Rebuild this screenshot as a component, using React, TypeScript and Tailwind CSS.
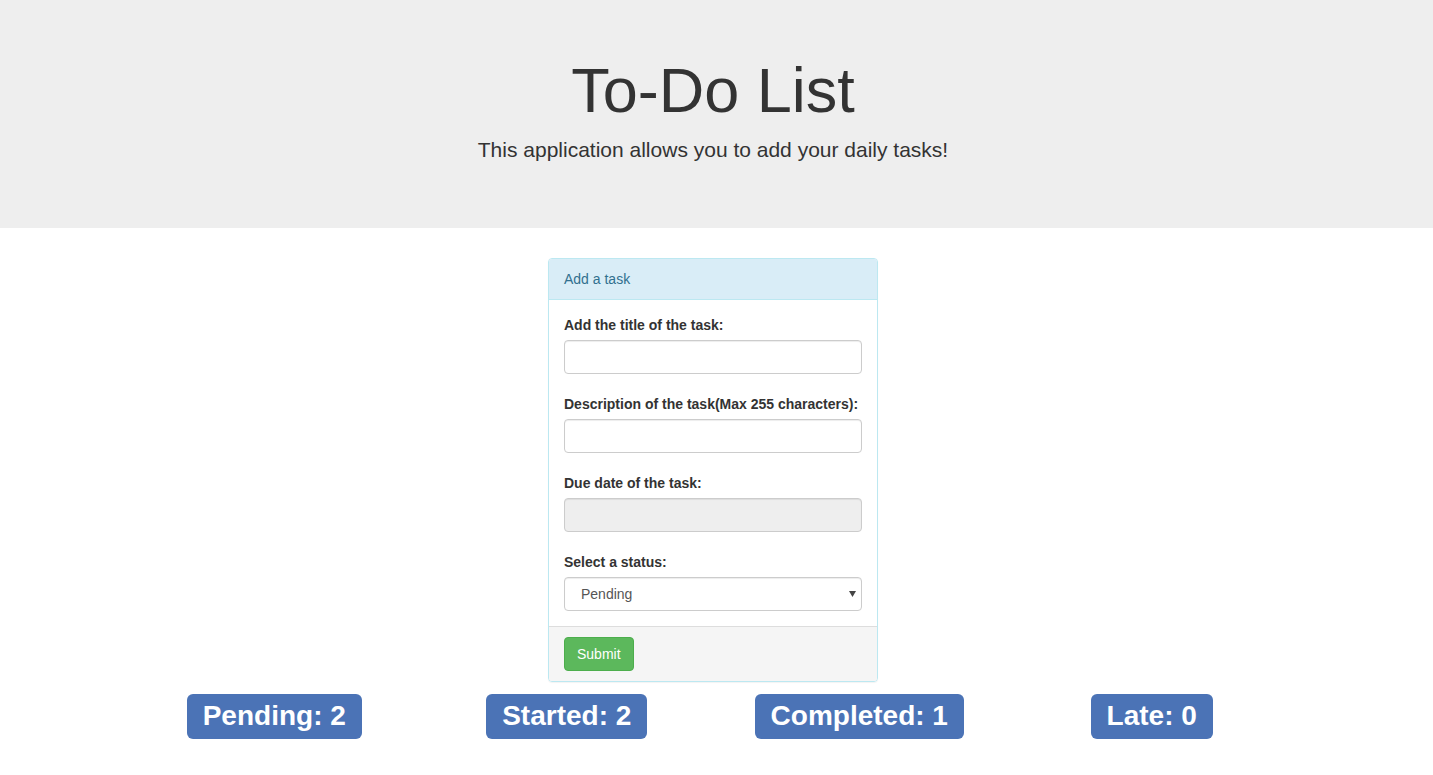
const counts = [
  { label: "Pending", value: 2 },
  { label: "Started", value: 2 },
  { label: "Completed", value: 1 },
  { label: "Late", value: 0 },
]

function Field({ label, children }: { label: string; children: React.ReactNode }) {
  return (
    <div className="mb-5 last:mb-0">
      <label className="block text-[14px] leading-5 font-bold text-[#333] mb-[5px]">{label}</label>
      {children}
    </div>
  )
}

const inputClass =
  "block w-full h-[34px] px-3 text-[14px] text-[#555] border border-[#ccc] rounded-[4px] shadow-[inset_0_1px_1px_rgba(0,0,0,0.075)] outline-none"

export default function App() {
  return (
    <div className="min-h-screen bg-white font-['Liberation_Sans',Arial,sans-serif] text-[#333]">
      <header className="bg-[#eee] h-[228px] flex flex-col items-center pt-[56px] pr-[7px]">
        <h1 className="text-[63px] leading-[1.1] font-normal text-[#333] mb-[10px]">To-Do List</h1>
        <p className="text-[21px] leading-[30px] text-[#333]">This application allows you to add your daily tasks!</p>
      </header>

      <main className="pr-[7px]">
        <div className="w-[330px] mx-auto mt-[30px] border border-[#bce8f1] rounded-[4px] shadow-[0_1px_1px_rgba(0,0,0,0.05)]">
          <div className="bg-[#d9edf7] text-[#31708f] text-[14px] leading-5 px-[15px] py-[10px] border-b border-[#bce8f1] rounded-t-[3px]">
            Add a task
          </div>
          <div className="p-[15px]">
            <Field label="Add the title of the task:">
              <input type="text" className={inputClass} />
            </Field>
            <Field label="Description of the task(Max 255 characters):">
              <input type="text" className={inputClass} />
            </Field>
            <Field label="Due date of the task:">
              <input type="text" readOnly className={inputClass + " bg-[#eee]"} />
            </Field>
            <Field label="Select a status:">
              <div className="relative">
                <select className={inputClass + " appearance-none bg-white pl-4"} defaultValue="Pending">
                  <option>Pending</option>
                  <option>Started</option>
                  <option>Completed</option>
                  <option>Late</option>
                </select>
                <svg
                  className="absolute right-[6px] top-[14px] pointer-events-none"
                  width="7"
                  height="6"
                  viewBox="0 0 7 6"
                >
                  <path d="M0 0h7L3.5 6z" fill="#444" />
                </svg>
              </div>
            </Field>
          </div>
          <div className="bg-[#f5f5f5] border-t border-[#ddd] px-[15px] py-[10px] rounded-b-[3px]">
            <button className="h-[34px] px-3 text-[14px] text-white bg-[#5cb85c] border border-[#4cae4c] rounded-[4px]">
              Submit
            </button>
          </div>
        </div>

        <div className="w-[1170px] mx-auto grid grid-cols-4 mt-[12px]">
          {counts.map((c) => (
            <div key={c.label} className="flex justify-center">
              <span className="inline-flex items-center h-[45px] px-4 pb-[2px] bg-[#4b73b6] text-white text-[28px] font-bold rounded-[6px]">
                {c.label}: {c.value}
              </span>
            </div>
          ))}
        </div>
      </main>
    </div>
  )
}
